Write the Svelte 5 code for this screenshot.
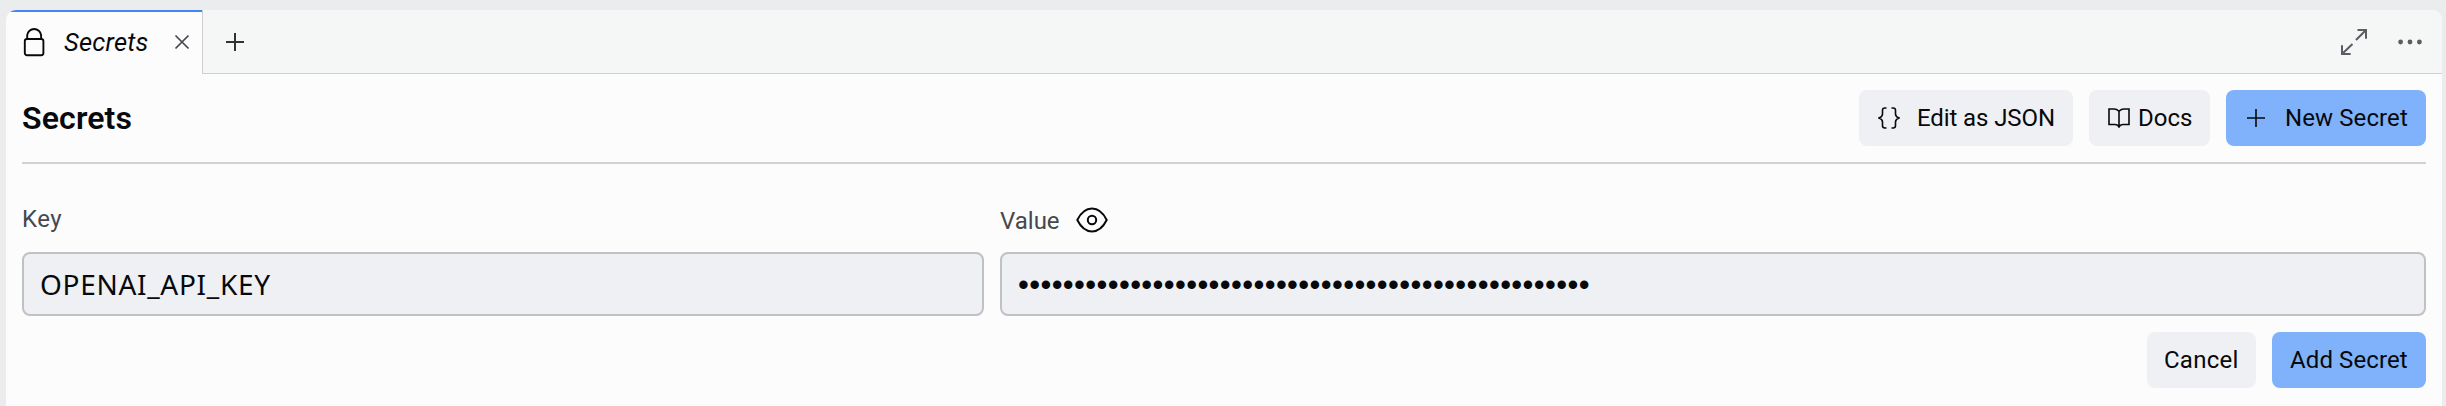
<script>
  let keyName = $state('OPENAI_API_KEY');
  const masked = '•'.repeat(51);
</script>

<div class="pane">
  <header class="tabs">
    <div class="tab">
      <svg class="lock" width="22" height="30" viewBox="0 0 22 30"><rect x="1.8" y="12" width="18.6" height="16.2" rx="2.2" /><path d="M4.2 12V8.2a7 7 0 0 1 13.9 0V12" /></svg>
      <span class="tab-name">Secrets</span>
      <svg class="close" width="16" height="16" viewBox="0 0 16 16"><path d="M1.5 1.5 14.5 14.5M14.5 1.5 1.5 14.5" /></svg>
    </div>
    <div class="strip">
      <svg class="plus" width="18" height="18" viewBox="0 0 18 18"><path d="M9 0v18M0 9h18" /></svg>
      <span class="spacer"></span>
      <svg class="expand" width="26" height="26" viewBox="0 0 26 26"><path d="M16.5 1H25v8.8M25 1 15 11M9.7 25H1v-8.8M1 25 11.5 15" /></svg>
      <svg class="more" width="24" height="6" viewBox="0 0 24 6"><circle cx="2.6" cy="3" r="2.4" /><circle cx="12" cy="3" r="2.4" /><circle cx="21.4" cy="3" r="2.4" /></svg>
    </div>
  </header>

  <main>
    <div class="title-row">
      <h1>Secrets</h1>
      <div class="actions">
        <button class="edit">
          <svg width="22" height="22" viewBox="0 0 22 22"><path d="M8.5 1H6.8Q4.5 1 4.5 3.2V7Q4.5 9.7 1 11Q4.5 12.3 4.5 15V18.8Q4.5 21 6.8 21H8.5M13.5 1H15.2Q17.5 1 17.5 3.2V7Q17.5 9.7 21 11Q17.5 12.3 17.5 15V18.8Q17.5 21 15.2 21H13.5" /></svg>
          <span>Edit as JSON</span>
        </button>
        <button class="docs">
          <svg width="22" height="20" viewBox="0 0 22 20"><path d="M11 3.2Q8.8 1 6 1H1V16.5H7Q9.8 16.5 11 19Q12.2 16.5 15 16.5H21V1H16Q13.2 1 11 3.2ZM11 3.2V19" /></svg>
          <span>Docs</span>
        </button>
        <button class="primary new">
          <svg width="18" height="18" viewBox="0 0 18 18"><path d="M9 0v18M0 9h18" /></svg>
          <span>New Secret</span>
        </button>
      </div>
    </div>

    <div class="labels">
      <span class="key-label">Key</span>
      <div class="value-label">
        <span>Value</span>
        <svg width="32" height="26" viewBox="0 0 32 26"><path d="M1.3 13Q7 1.6 16 1.6T30.7 13Q25 24.4 16 24.4T1.3 13Z" /><circle cx="16" cy="13" r="4.2" /></svg>
      </div>
    </div>
    <div class="fields">
      <div class="field name">{keyName}</div>
      <div class="field dots">{masked}</div>
    </div>
    <div class="form-actions">
      <button class="cancel"><span>Cancel</span></button>
      <button class="primary add"><span>Add Secret</span></button>
    </div>
  </main>
</div>

<style>
  :global(body) { background: #ebecee; }
  * { box-sizing: border-box; }
  .pane {
    height: 396px;
    margin: 10px 4px 0 6px;
    background: #fcfcfc;
    border-radius: 10px 10px 0 0;
    overflow: hidden;
    font-family: Roboto, sans-serif;
    color: #07090c;
  }
  svg { display: block; flex: none; fill: none; stroke: #07090c; stroke-width: 1.6; }
  .tabs { display: flex; height: 64px; }
  .tab {
    width: 196px;
    border-top: 2px solid #4285f4;
    display: flex;
    align-items: center;
    padding: 0 12px 2px 17px;
  }
  .lock { stroke-width: 1.9; }
  .tab-name { margin-left: 19px; width: 94px; font-size: 25.5px; font-style: italic; letter-spacing: 0.25px; line-height: 32px; }
  .close { margin-left: auto; stroke: #44474c; stroke-width: 1.7; }
  .strip {
    flex: 1;
    display: flex;
    align-items: center;
    background: #f5f7f6;
    border-left: 1px solid #cfd1d1;
    border-bottom: 1px solid #cfd1d1;
    padding: 0 20px 0 23px;
  }
  .plus { stroke: #303235; stroke-width: 2; }
  .spacer { flex: 1; }
  .expand { stroke: #5a5d62; stroke-width: 2; margin-right: 31px; }
  .more { fill: #5a5d62; stroke: none; }
  main { padding: 0 16px; }
  .title-row {
    height: 90px;
    display: flex;
    align-items: center;
    justify-content: space-between;
    border-bottom: 2px solid #d1d2d3;
  }
  h1 { margin: 0; font-size: 32px; font-weight: 600; line-height: 40px; letter-spacing: 0.15px; }
  .actions, .form-actions { display: flex; gap: 16px; }
  button {
    height: 56px;
    border: 0;
    border-radius: 8px;
    padding: 0;
    background: #eff0f3;
    color: inherit;
    font: 24px/30px Roboto, sans-serif;
    display: flex;
    align-items: center;
    white-space: nowrap;
  }
  .primary { background: #7fb2fa; }
  .edit { width: 214px; padding-left: 19px; }
  .edit span { margin-left: 17px; letter-spacing: -0.1px; }
  .docs { width: 121px; padding-left: 19px; }
  .docs span { margin-left: 8px; }
  .new { width: 200px; padding-left: 21px; }
  .new span { margin-left: 20px; letter-spacing: 0.1px; }
  .cancel { width: 109px; padding-left: 17px; }
  .cancel span { letter-spacing: 0.25px; }
  .add { width: 154px; padding-left: 18px; }
  .add span { letter-spacing: 0.1px; }
  .labels, .fields { display: grid; grid-template-columns: 962px 1fr; column-gap: 16px; }
  .labels { height: 88px; padding-top: 40px; font-size: 24px; line-height: 30px; color: #46484e; }
  .key-label { letter-spacing: 0.5px; }
  .value-label { display: flex; gap: 16px; align-items: center; height: 32px; }
  .value-label span { margin-top: 1px; }
  .value-label svg { stroke-width: 2; }
  .field {
    height: 64px;
    border: 2px solid #c0c1c3;
    border-radius: 8px;
    background: #eff0f3;
    padding-left: 16px;
    line-height: 60px;
    font-size: 28px;
    white-space: nowrap;
  }
  .name { font-family: "Noto Sans", sans-serif; letter-spacing: 0.7px; }
  .dots { font-family: "Liberation Sans", sans-serif; font-size: 31px; letter-spacing: 0.36px; line-height: 61px; }
  .form-actions { margin-top: 16px; justify-content: flex-end; }
</style>
